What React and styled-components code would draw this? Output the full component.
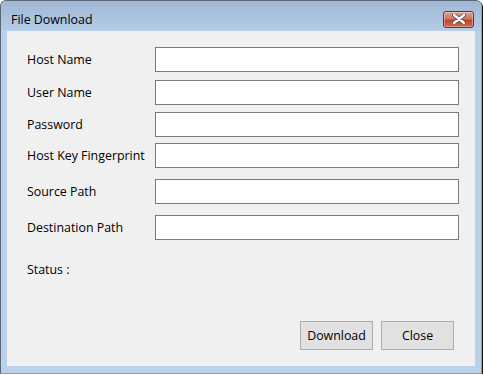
import styled, { createGlobalStyle } from "styled-components";

const fields = [
  { label: "Host Name", gap: 0 },
  { label: "User Name", gap: 8 },
  { label: "Password", gap: 7 },
  { label: "Host Key Fingerprint", gap: 6 },
  { label: "Source Path", gap: 11 },
  { label: "Destination Path", gap: 11 },
];

function App() {
  return (
    <>
      <GlobalStyle />
      <Window>
        <TitleBar>
          <Title>File Download</Title>
          <CloseX aria-label="Close">
            <svg width="14" height="10" viewBox="0 0 14 10">
              <path
                d="M2 1 L12 9 M12 1 L2 9"
                stroke="#4a4a4a"
                strokeWidth="4"
                strokeLinecap="round"
              />
              <path
                d="M2 1 L12 9 M12 1 L2 9"
                stroke="#ffffff"
                strokeWidth="2.4"
                strokeLinecap="round"
              />
            </svg>
          </CloseX>
        </TitleBar>
        <Frame>
          <Client>
            <Form>
              {fields.map((f) => (
                <Row key={f.label} $gap={f.gap}>
                  <Label>{f.label}</Label>
                  <TextBox />
                </Row>
              ))}
            </Form>
            <Status>Status :</Status>
            <Buttons>
              <Button>Download</Button>
              <Button>Close</Button>
            </Buttons>
          </Client>
        </Frame>
      </Window>
    </>
  );
}

const GlobalStyle = createGlobalStyle`
  html, body {
    margin: 0;
    padding: 0;
    background: #ffffff;
  }
  body {
    font-family: "Open Sans", "Noto Sans", sans-serif;
  }
`;

const Window = styled.div`
  box-sizing: border-box;
  width: 482px;
  height: 374px;
  display: flex;
  flex-direction: column;
  border: 1px solid #5b6676;
  border-right-color: #33c3e8;
  border-bottom-color: #33c3e8;
  border-radius: 6px 6px 0 0;
  background: #b9d1ea;
  box-shadow: 1px 1px 0 #101010;
  overflow: hidden;
`;

const TitleBar = styled.div`
  box-sizing: border-box;
  height: 30px;
  padding: 6px 7px 0 10px;
  display: flex;
  align-items: center;
  justify-content: space-between;
  background: linear-gradient(#9fb7d3, #b6cde7);
`;

const Title = styled.span`
  font-size: 12.4px;
  color: #000000;
`;

const CloseX = styled.div`
  box-sizing: border-box;
  width: 31px;
  height: 17px;
  display: flex;
  align-items: center;
  justify-content: center;
  border: 1px solid #7d2b22;
  border-radius: 3px;
  background: linear-gradient(#e2a293 0%, #d3725e 45%, #c1452f 55%, #cf6a50 100%);
  box-shadow: inset 0 0 0 1px rgba(255, 255, 255, 0.35);
`;

const Frame = styled.div`
  flex: 1;
  display: flex;
  padding: 0 6px 7px 6px;
`;

const Client = styled.div`
  flex: 1;
  min-width: 0;
  display: flex;
  flex-direction: column;
  background: #f0f0f0;
  padding: 16px 16px 16px 20px;
`;

const Form = styled.div`
  display: flex;
  flex-direction: column;
`;

const Row = styled.div`
  display: flex;
  align-items: center;
  margin-top: ${(p) => p.$gap}px;
`;

const Label = styled.span`
  width: 128px;
  flex-shrink: 0;
  font-size: 12.4px;
  color: #000000;
  white-space: nowrap;
`;

const TextBox = styled.div`
  box-sizing: border-box;
  width: 304px;
  flex-shrink: 0;
  height: 25px;
  background: #ffffff;
  border: 1px solid #7a7a7a;
`;

const Status = styled.div`
  margin-top: 22px;
  font-size: 12.4px;
  line-height: 16px;
  color: #000000;
`;

const Buttons = styled.div`
  margin-top: auto;
  padding-right: 5px;
  display: flex;
  justify-content: flex-end;
  gap: 8px;
`;

const Button = styled.div`
  box-sizing: border-box;
  width: 73px;
  height: 29px;
  display: flex;
  align-items: center;
  justify-content: center;
  background: #e1e1e1;
  border: 1px solid #adadad;
  font-size: 12.4px;
  color: #000000;
`;

export default App;
